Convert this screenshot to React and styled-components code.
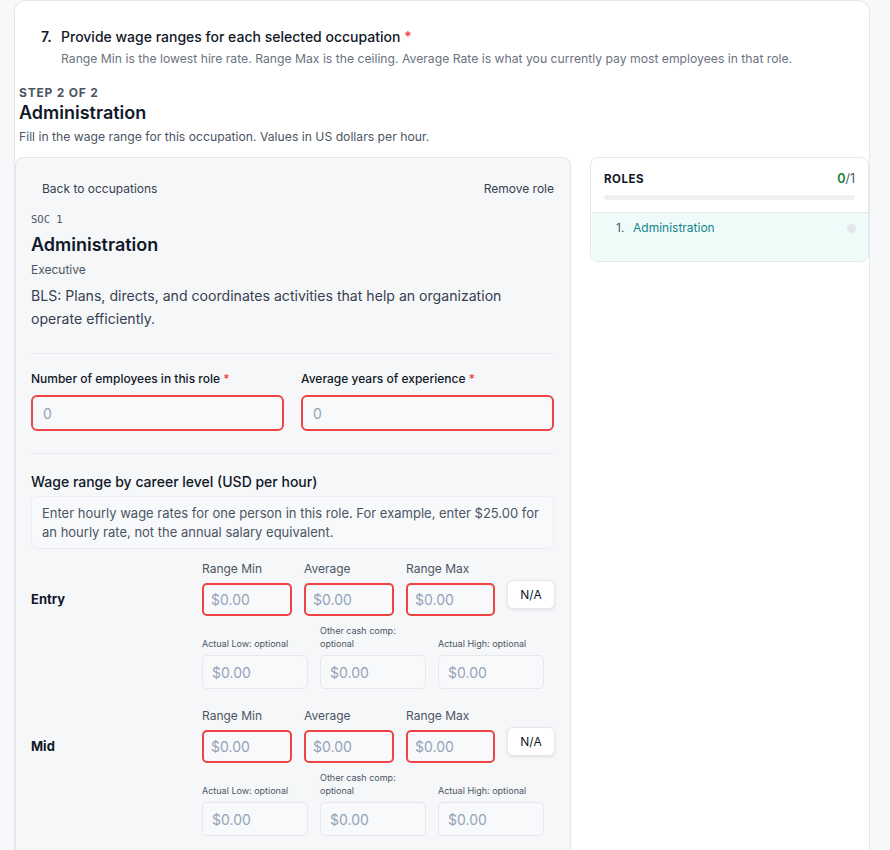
import React from 'react';
import styled, { createGlobalStyle } from 'styled-components';

const GlobalStyle = createGlobalStyle`
  body {
    margin: 0;
    background: #f7f8fa;
    font-family: Inter, "Noto Sans", "Liberation Sans", sans-serif;
    color: #111827;
  }
`;

const levels = ['Entry', 'Mid'];

const App = () => {
  return (
    <Page>
      <GlobalStyle />
      <Card>
        <Question>
          <QNumber>7.</QNumber>
          <div>
            <QTitle>
              Provide wage ranges for each selected occupation <Req>*</Req>
            </QTitle>
            <QHint>
              Range Min is the lowest hire rate. Range Max is the ceiling. Average Rate is what you
              currently pay most employees in that role.
            </QHint>
          </div>
        </Question>

        <StepHeader>
          <StepLabel>Step 2 of 2</StepLabel>
          <StepTitle>Administration</StepTitle>
          <StepHint>Fill in the wage range for this occupation. Values in US dollars per hour.</StepHint>
        </StepHeader>

        <Columns>
          <MainPanel>
            <TopBar>
              <GhostButton $pad="0 11px">Back to occupations</GhostButton>
              <GhostButton $pad="0">Remove role</GhostButton>
            </TopBar>
            <Soc>SOC 1</Soc>
            <RoleTitle>Administration</RoleTitle>
            <RoleGroup>Executive</RoleGroup>
            <RoleDesc>
              BLS: Plans, directs, and coordinates activities that help an organization operate
              efficiently.
            </RoleDesc>

            <Divider $mt={23} $mb={16} />

            <TwoCols>
              <Field>
                <FieldLabel>
                  Number of employees in this role <Req>*</Req>
                </FieldLabel>
                <BigInput placeholder="0" />
              </Field>
              <Field>
                <FieldLabel>
                  Average years of experience <Req>*</Req>
                </FieldLabel>
                <BigInput placeholder="0" />
              </Field>
            </TwoCols>

            <Divider $mt={22} $mb={18} />

            <SectionTitle>Wage range by career level (USD per hour)</SectionTitle>
            <InfoBox>
              Enter hourly wage rates for one person in this role. For example, enter $25.00 for an
              hourly rate, not the annual salary equivalent.
            </InfoBox>

            {levels.map(level => (
              <LevelBlock key={level}>
                <LevelName>{level}</LevelName>
                <LevelFields>
                  <PrimaryRow>
                    {['Range Min', 'Average', 'Range Max'].map(label => (
                      <Field key={label}>
                        <SmallLabel>{label}</SmallLabel>
                        <RateInput placeholder="$0.00" />
                      </Field>
                    ))}
                    <NaButton>N/A</NaButton>
                  </PrimaryRow>
                  <SecondaryRow>
                    {['Actual Low: optional', 'Other cash comp: optional', 'Actual High: optional'].map(
                      label => (
                        <OptField key={label}>
                          <TinyLabel>{label}</TinyLabel>
                          <OptInput placeholder="$0.00" />
                        </OptField>
                      )
                    )}
                  </SecondaryRow>
                </LevelFields>
              </LevelBlock>
            ))}
          </MainPanel>

          <Side>
            <RolesPanel>
              <RolesHead>
                <RolesRow>
                  <RolesTitle>Roles</RolesTitle>
                  <RolesCount>
                    <Done>0</Done>/1
                  </RolesCount>
                </RolesRow>
                <Progress />
              </RolesHead>
              <RoleList>
                <RoleItem>
                  <ItemNum>1.</ItemNum>
                  <ItemName>Administration</ItemName>
                  <StatusDot />
                </RoleItem>
              </RoleList>
            </RolesPanel>
          </Side>
        </Columns>
      </Card>
    </Page>
  );
};

export default App;

const Page = styled.div`
  height: 850px;
  overflow: hidden;
`;

const Card = styled.div`
  margin-left: 14px;
  width: 854px;
  min-height: 900px;
  background: #ffffff;
  border: 1px solid #e5e7eb;
  border-radius: 12px 12px 0 0;
  border-bottom: none;
`;

const Question = styled.div`
  display: flex;
  padding: 26px 0 0 26px;
`;

const QNumber = styled.span`
  min-width: 20px;
  font-size: 14px;
  line-height: 20px;
  font-weight: 600;
`;

const QTitle = styled.div`
  font-size: 14px;
  line-height: 20px;
  font-weight: 500;
  color: #111827;
`;

const Req = styled.span`
  color: #ef4444;
`;

const QHint = styled.div`
  margin-top: 3px;
  font-size: 12.2px;
  line-height: 18px;
  color: #6b7280;
`;

const StepHeader = styled.div`
  padding: 18px 0 0 4px;
`;

const StepLabel = styled.div`
  font-size: 12px;
  line-height: 14px;
  font-weight: 700;
  letter-spacing: 0.8px;
  text-transform: uppercase;
  color: #4b5563;
`;

const StepTitle = styled.div`
  margin-top: 1px;
  font-size: 18px;
  line-height: 24px;
  font-weight: 600;
  color: #111827;
`;

const StepHint = styled.div`
  margin-top: 4px;
  font-size: 12.2px;
  line-height: 16px;
  color: #4b5563;
`;

const Columns = styled.div`
  display: grid;
  grid-template-columns: 556px 279px;
  gap: 19px;
  margin-top: 12px;
`;

const MainPanel = styled.div`
  background: #f6f7f9;
  border: 1px solid #e5e7eb;
  border-radius: 8px;
  padding: 17px 16px 40px 15px;
`;

const TopBar = styled.div`
  display: flex;
  justify-content: space-between;
  align-items: center;
  height: 26px;
`;

const GhostButton = styled.button`
  border: none;
  background: transparent;
  font-family: inherit;
  font-size: 12px;
  color: #374151;
  padding: ${p => p.$pad};
  height: 26px;
  cursor: pointer;
`;

const Soc = styled.div`
  margin-top: 11px;
  font-family: "DejaVu Sans Mono", "Liberation Mono", monospace;
  font-size: 10.5px;
  line-height: 14px;
  color: #4b5563;
`;

const RoleTitle = styled.div`
  margin-top: 7px;
  font-size: 18px;
  line-height: 24px;
  font-weight: 600;
  color: #111827;
`;

const RoleGroup = styled.div`
  margin-top: 5px;
  font-size: 12px;
  line-height: 16px;
  color: #4b5563;
`;

const RoleDesc = styled.p`
  margin: 6px 0 0;
  max-width: 500px;
  font-size: 14.1px;
  line-height: 23px;
  color: #374151;
`;

const Divider = styled.div`
  height: 1px;
  background: #e8eaed;
  margin: ${p => `${p.$mt}px 0 ${p.$mb}px`};
`;

const TwoCols = styled.div`
  display: grid;
  grid-template-columns: 1fr 1fr;
  gap: 17px;
`;

const Field = styled.div`
  display: flex;
  flex-direction: column;
`;

const FieldLabel = styled.label`
  font-size: 12px;
  line-height: 18px;
  font-weight: 500;
  color: #111827;
  margin-bottom: 7px;
`;

const BaseInput = styled.input`
  box-sizing: border-box;
  width: 100%;
  font-family: inherit;
  background: #f8f9fb;
  outline: none;
  color: #111827;
  &::placeholder {
    color: #94a3b8;
  }
`;

const BigInput = styled(BaseInput)`
  height: 36px;
  border: 2px solid #ef4444;
  border-radius: 6px;
  padding: 0 10px;
  font-size: 14px;
`;

const SectionTitle = styled.div`
  font-size: 14px;
  line-height: 20px;
  font-weight: 500;
  color: #111827;
`;

const InfoBox = styled.div`
  margin-top: 4px;
  background: #f8f9fb;
  border: 1px solid #eceef1;
  border-radius: 6px;
  padding: 7px 10px 6px;
  font-size: 13px;
  line-height: 19px;
  color: #4b5563;
`;

const LevelBlock = styled.div`
  display: grid;
  grid-template-columns: 171px 1fr;
  margin-top: 12px;
  & + & {
    margin-top: 19px;
  }
`;

const LevelName = styled.div`
  padding-top: 29px;
  font-size: 13px;
  line-height: 18px;
  font-weight: 700;
  color: #111827;
`;

const LevelFields = styled.div`
  display: flex;
  flex-direction: column;
  gap: 8px;
`;

const PrimaryRow = styled.div`
  display: grid;
  grid-template-columns: 90px 90px 89px 48px;
  gap: 12px;
  align-items: start;
`;

const SmallLabel = styled.label`
  font-size: 12px;
  line-height: 16px;
  color: #4b5563;
  margin-bottom: 6px;
`;

const RateInput = styled(BaseInput)`
  height: 33px;
  border: 2px solid #ef4444;
  border-radius: 5px;
  padding: 0 7px;
  font-size: 14px;
`;

const NaButton = styled.button`
  margin-top: 19px;
  height: 29px;
  border: 1px solid #e5e7eb;
  border-radius: 6px;
  background: #ffffff;
  box-shadow: 0 1px 3px rgba(0, 0, 0, 0.1);
  font-family: inherit;
  font-size: 12px;
  color: #111827;
`;

const SecondaryRow = styled.div`
  display: grid;
  grid-template-columns: 106px 106px 106px;
  gap: 12px;
  align-items: end;
`;

const OptField = styled.div`
  display: flex;
  flex-direction: column;
`;

const TinyLabel = styled.label`
  font-size: 9px;
  line-height: 13px;
  color: #4b5563;
  margin-bottom: 5px;
`;

const OptInput = styled(BaseInput)`
  height: 34px;
  border: 1px solid #e5e7eb;
  border-radius: 5px;
  padding: 0 9px;
  font-size: 14px;
`;

const Side = styled.div``;

const RolesPanel = styled.div`
  background: #ffffff;
  border: 1px solid #e5e7eb;
  border-radius: 8px;
  overflow: hidden;
`;

const RolesHead = styled.div`
  padding: 14px 13px 12px 13px;
  border-bottom: 1px solid #e5e7eb;
`;

const RolesRow = styled.div`
  display: flex;
  justify-content: space-between;
  align-items: center;
`;

const RolesTitle = styled.div`
  font-size: 11.5px;
  line-height: 14px;
  font-weight: 700;
  letter-spacing: 0.5px;
  text-transform: uppercase;
  color: #111827;
`;

const RolesCount = styled.div`
  font-size: 12.5px;
  line-height: 14px;
  color: #4b5563;
`;

const Done = styled.span`
  color: #15803d;
  font-weight: 600;
`;

const Progress = styled.div`
  margin-top: 9px;
  height: 5px;
  border-radius: 3px;
  background: #eef0f2;
`;

const RoleList = styled.div`
  background: #effbf8;
  padding: 7px 12px 25px 25px;
`;

const RoleItem = styled.div`
  display: flex;
  align-items: center;
  font-size: 12px;
  line-height: 16px;
`;

const ItemNum = styled.span`
  color: #4b5563;
  width: 17px;
`;

const ItemName = styled.span`
  flex: 1;
  color: #13858a;
`;

const StatusDot = styled.span`
  width: 9px;
  height: 9px;
  border-radius: 50%;
  background: #e5e7eb;
`;
